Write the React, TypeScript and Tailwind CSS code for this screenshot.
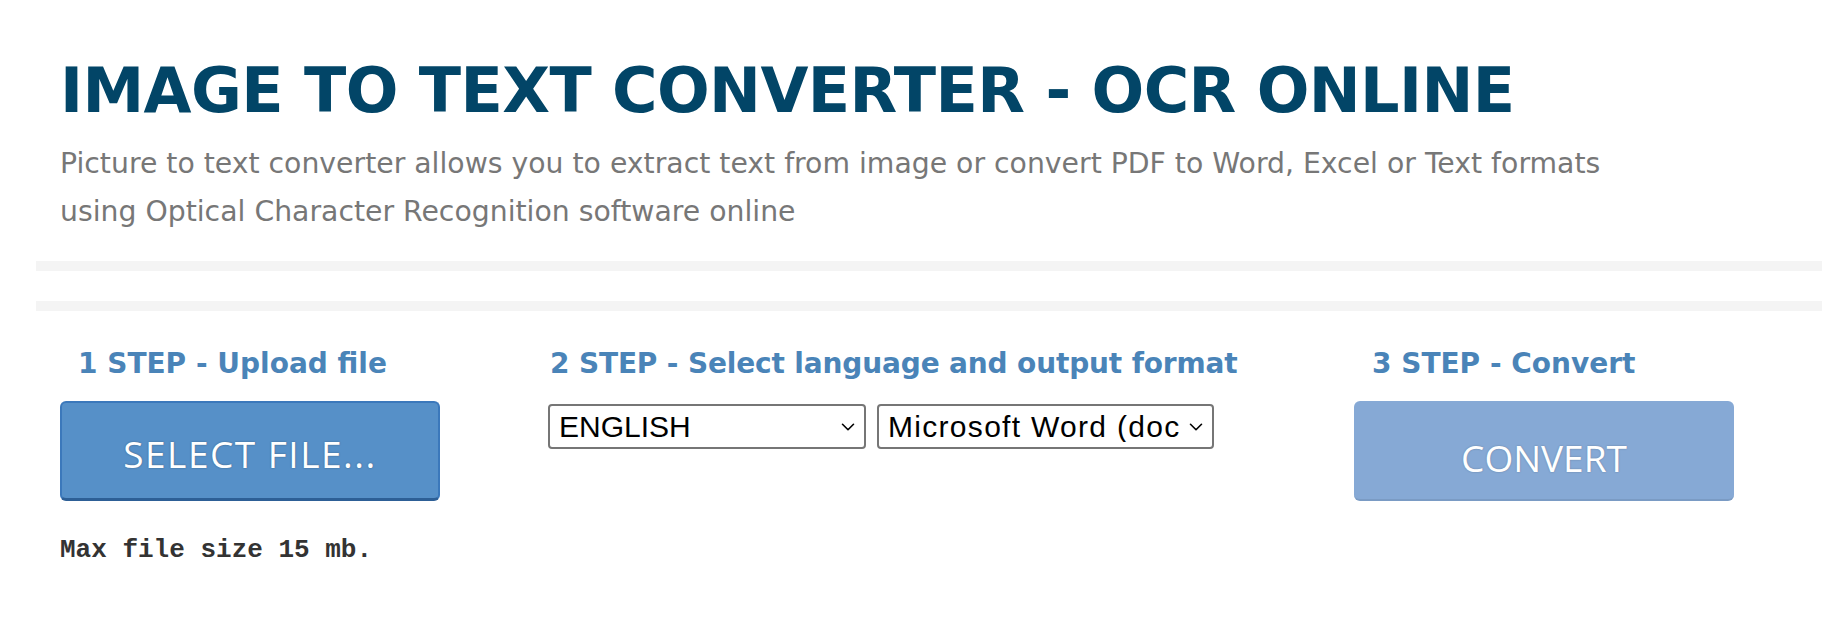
import { ChevronDown } from 'lucide-react'

const verdana = "font-['DejaVu_Sans',Verdana,sans-serif]"

function Select({ value, width, tracking }: { value: string; width: string; tracking: string }) {
  return (
    <div className={`relative ${width}`}>
      <select
        defaultValue={value}
        className={`h-[45px] w-full appearance-none rounded-[4px] border-2 border-[#767676] bg-white pl-[9px] pr-[32px] font-['Liberation_Sans',Arial,sans-serif] text-[30px] leading-none text-black outline-none ${tracking}`}
      >
        <option>{value}</option>
      </select>
      <ChevronDown
        size={22}
        strokeWidth={1.75}
        className="pointer-events-none absolute right-[7px] top-[12px] text-black"
      />
    </div>
  )
}

export default function App() {
  return (
    <div className="min-h-screen bg-white">
      <div className={`pl-[60px] pt-[60px] ${verdana}`}>
        <h1 className="text-[62px] font-bold leading-none tracking-[-0.6px] text-[#024567]">
          IMAGE TO TEXT CONVERTER - OCR ONLINE
        </h1>
        <p className="mt-[18px] w-[1620px] text-[28.3px] leading-[48px] text-[#777777]">
          Picture to text converter allows you to extract text from image or convert PDF to Word, Excel or Text formats
          using Optical Character Recognition software online
        </p>
      </div>

      <div className="ml-[36px] mt-[25px] h-[10px] bg-[#f4f4f4]" />
      <div className="ml-[36px] mt-[30px] h-[10px] bg-[#f4f4f4]" />

      <div className="flex pl-[60px] pt-[35px]">
        {/* step 1 */}
        <div className="w-[380px]">
          <h2 className={`pl-[18px] text-[28px] font-bold leading-[36px] text-[#4a84b8] ${verdana}`}>
            1 STEP - Upload file
          </h2>
          <button className="mt-[19px] flex h-[100px] w-[380px] items-center justify-center rounded-[6px] border-2 border-[#3b78bb] border-b-[3px] border-b-[#2d5f96] bg-[#5690c8] pt-[6px] font-['Open_Sans',sans-serif] text-[37px] tracking-[1.5px] text-white [text-shadow:0_0_2px_rgba(0,0,0,0.35)]">
            SELECT FILE...
          </button>
          <p className="mt-[34px] font-['Liberation_Mono','Courier_New',monospace] text-[26px] font-bold leading-[30px] text-[#333333]">
            Max file size 15 mb.
          </p>
        </div>

        {/* step 2 */}
        <div className="ml-[108px] w-[806px]">
          <h2 className={`pl-[2px] text-[28px] font-bold leading-[36px] tracking-[-0.15px] text-[#4a84b8] ${verdana}`}>
            2 STEP - Select language and output format
          </h2>
          <div className="mt-[22px] flex gap-[11px]">
            <Select value="ENGLISH" width="w-[318px]" tracking="" />
            <Select value="Microsoft Word (docx)" width="w-[337px]" tracking="tracking-[1.3px]" />
          </div>
        </div>

        {/* step 3 */}
        <div className="w-[380px]">
          <h2 className={`pl-[18px] text-[28px] font-bold leading-[36px] text-[#4a84b8] ${verdana}`}>
            3 STEP - Convert
          </h2>
          <button className="mt-[19px] flex h-[100px] w-[380px] items-center justify-center rounded-[6px] border-b-[2px] border-b-[#7a9bc4] bg-[#86a9d5] pt-[16px] font-['Open_Sans',sans-serif] text-[37px] text-white [text-shadow:0_0_2px_rgba(0,0,0,0.25)]">
            CONVERT
          </button>
        </div>
      </div>
    </div>
  )
}
